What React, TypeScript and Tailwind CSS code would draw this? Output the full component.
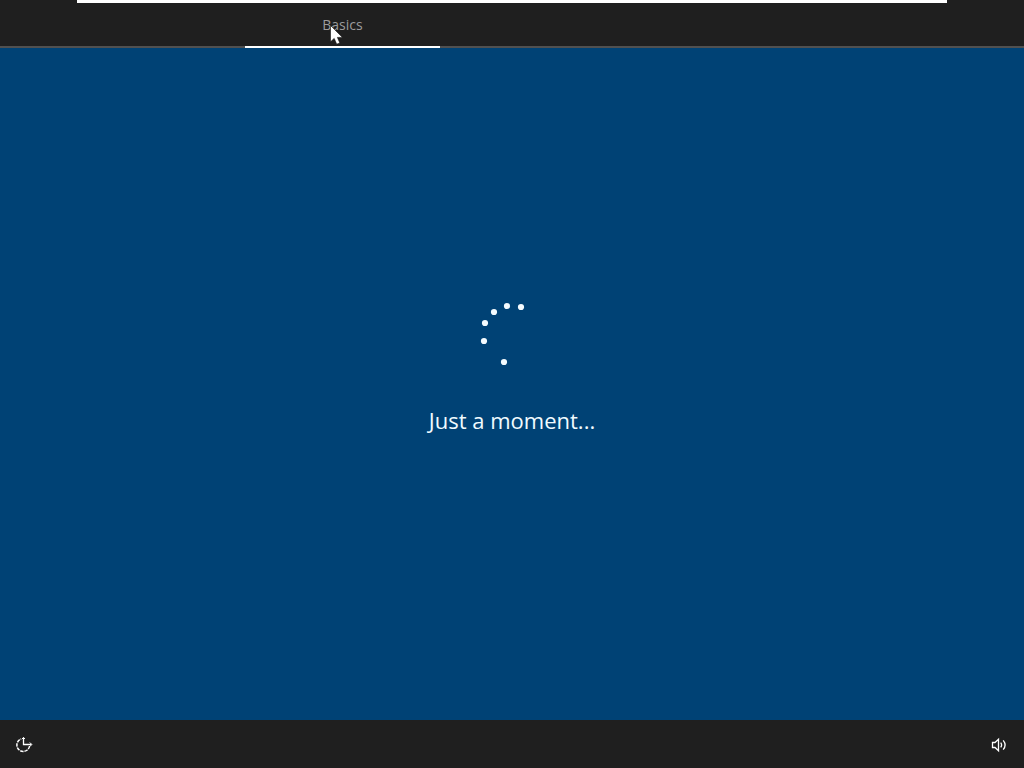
const dots = [
  { x: 35, y: 16 },
  { x: 49, y: 17 },
  { x: 22, y: 22 },
  { x: 13, y: 33 },
  { x: 12, y: 51 },
  { x: 32, y: 72 },
];

const Spinner: React.FC = () => (
  <svg width={80} height={90} viewBox="0 0 80 90" fill="#f4fbff" aria-hidden="true">
    {dots.map(dot => (
      <circle key={`${dot.x}-${dot.y}`} cx={dot.x} cy={dot.y} r={3.1} />
    ))}
  </svg>
);

const Pointer: React.FC = () => (
  <svg
    className="absolute left-[330px] top-[25px] pointer-events-none"
    width={14}
    height={20}
    viewBox="0 0 14 20"
    aria-hidden="true"
  >
    <path
      d="M.5.5v16.3l3.7-3.4 2.5 5.8 3.1-1.3-2.4-5.5h5.1z"
      fill="#fff"
      stroke="#111"
      strokeWidth={0.6}
    />
  </svg>
);

const EaseOfAccessIcon: React.FC = () => (
  <svg width={18} height={18} viewBox="0 0 18 18" fill="none" stroke="#fff" aria-hidden="true">
    <path d="M14.6 11A6.4 6.4 0 1 1 6.2 4" strokeWidth={1.5} strokeDasharray="3.4 0.9" />
    <path d="M8.5 2.5v7H16.5" strokeWidth={1.3} />
    <path d="M7 4l1.5-1.5L10 4M14.8 7.5l2 2-2 2" strokeWidth={1} />
  </svg>
);

const VolumeIcon: React.FC = () => (
  <svg width={16} height={18} viewBox="0 0 16 18" fill="none" stroke="#fff" aria-hidden="true">
    <path d="M1.5 7.5H4l3.5-3.2v11.4L4 12.5H1.5z" strokeWidth={1.3} />
    <path d="M9.7 7.6q1.8 2.4 0 4.8M12.2 5.3q3.8 4.7 0 9.4" strokeWidth={1.3} />
  </svg>
);

export default function App() {
  return (
    <div className="relative min-h-screen flex flex-col bg-[#004275] font-['Open_Sans','Noto_Sans',sans-serif]">
      <header className="h-12 flex flex-col bg-[#1f1f1f]">
        <div className="h-[3px] w-[85%] mx-auto bg-white"></div>
        <nav className="flex-grow grid grid-cols-[245fr_195fr_584fr]">
          <div className="border-b-2 border-[#505050]"></div>
          <button
            type="button"
            className="border-b-2 border-white text-sm text-[#9c9c9c] flex items-center justify-center"
          >
            Basics
          </button>
          <div className="border-b-2 border-[#505050]"></div>
        </nav>
      </header>
      <main className="flex-grow flex flex-col items-center justify-center">
        <Spinner />
        <p className="mt-6 mb-[42px] text-[22px] leading-8 text-[#f0fbff]" role="status">
          Just a moment...
        </p>
      </main>
      <footer className="h-12 px-[15px] flex items-center justify-between bg-[#1f1f1f]">
        <button type="button" aria-label="Ease of access">
          <EaseOfAccessIcon />
        </button>
        <button type="button" aria-label="Volume" className="mr-0.5">
          <VolumeIcon />
        </button>
      </footer>
      <Pointer />
    </div>
  );
}
